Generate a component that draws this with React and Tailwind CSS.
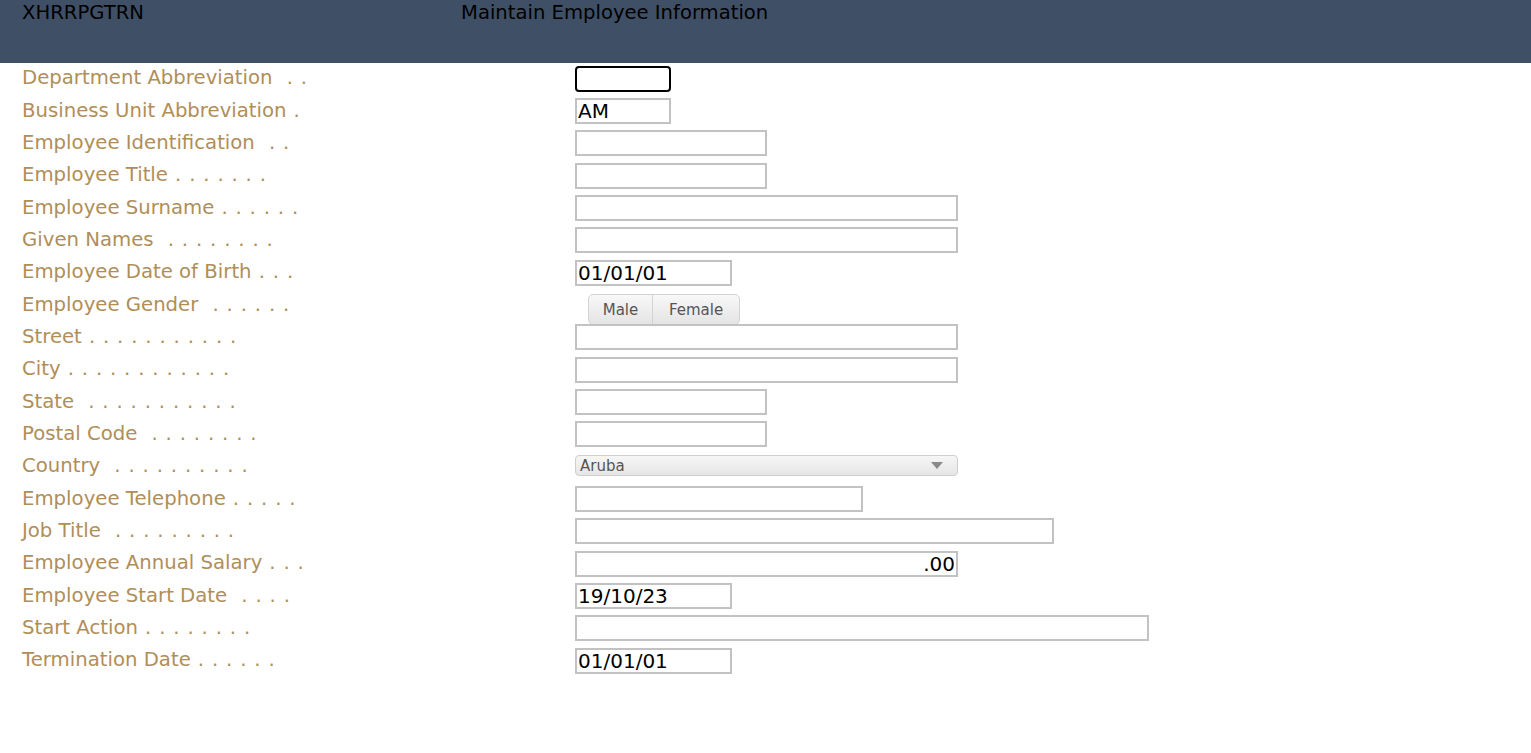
import React from "react";

// label name + dot leader, padded to 28 characters the way the green screen did
const fields = [
  { name: "Department Abbreviation", dots: "  . .", w: "w-[96px]", focused: true },
  { name: "Business Unit Abbreviation", dots: " .", w: "w-[96px]", value: "AM" },
  { name: "Employee Identification", dots: "  . .", w: "w-[192px]" },
  { name: "Employee Title", dots: " . . . . . . .", w: "w-[192px]" },
  { name: "Employee Surname", dots: " . . . . . .", w: "w-[383px]" },
  { name: "Given Names", dots: "  . . . . . . . .", w: "w-[383px]" },
  { name: "Employee Date of Birth", dots: " . . .", w: "w-[157px]", value: "01/01/01" },
  { name: "Employee Gender", dots: "  . . . . . .", type: "gender" },
  { name: "Street", dots: " . . . . . . . . . . .", w: "w-[383px]" },
  { name: "City", dots: " . . . . . . . . . . . .", w: "w-[383px]" },
  { name: "State", dots: "  . . . . . . . . . . .", w: "w-[192px]" },
  { name: "Postal Code", dots: "  . . . . . . . .", w: "w-[192px]" },
  { name: "Country", dots: "  . . . . . . . . . .", type: "select" },
  { name: "Employee Telephone", dots: " . . . . .", w: "w-[288px]" },
  { name: "Job Title", dots: "  . . . . . . . . .", w: "w-[479px]" },
  { name: "Employee Annual Salary", dots: " . . .", w: "w-[383px]", value: ".00", right: true },
  { name: "Employee Start Date", dots: "  . . . .", w: "w-[157px]", value: "19/10/23" },
  { name: "Start Action", dots: " . . . . . . . .", w: "w-[574px]" },
  { name: "Termination Date", dots: " . . . . . .", w: "w-[157px]", value: "01/01/01" },
];

function GenderToggle() {
  return (
    <div className="ml-[13px] mt-[9px] flex h-[31px] rounded-[5px] border border-[#d3d3d3] bg-gradient-to-b from-[#f8f8f8] to-[#e4e4e4] text-[15px] text-[#555] overflow-hidden">
      <span className="w-[64px] flex items-center justify-center border-r border-[#d3d3d3] pt-[1px]">Male</span>
      <span className="w-[86px] flex items-center justify-center pt-[1px]">Female</span>
    </div>
  );
}

function CountrySelect() {
  return (
    <div className="w-[383px] h-[21px] mb-[4px] rounded-[4px] border border-[#cfcfcf] bg-gradient-to-b from-[#f6f6f6] to-[#e6e6e6] flex items-center justify-between pl-[4px] pr-[14px] text-[15px] text-[#555]">
      <span className="leading-none pt-[3px]">Aruba</span>
      <svg width="12" height="7" viewBox="0 0 12 7">
        <path d="M0 0h12L6 7z" fill="#8a8a8a" />
      </svg>
    </div>
  );
}

function Field({ f }) {
  if (f.type === "gender") return <GenderToggle />;
  if (f.type === "select") return <CountrySelect />;
  const border = f.focused
    ? "border-2 border-black rounded-[4px]"
    : "border-2 border-[#c2c2c2]";
  return (
    <div
      className={`${f.w} ${border} h-[26px] mb-[1px] flex items-center text-[20px] text-black leading-none ${
        f.right ? "justify-end pr-[1px]" : "pl-[1px]"
      }`}
    >
      <span className="pt-[1px]">{f.value || ""}</span>
    </div>
  );
}

export default function App() {
  return (
    <div className="w-[1531px] min-h-[753px] bg-white font-['DejaVu_Sans',sans-serif]">
      <div className="h-[63px] bg-[#3f4f66] flex text-[19.6px] text-black leading-none pt-[3px]">
        <div className="w-[461px] pl-[22px]">XHRRPGTRN</div>
        <div>Maintain Employee Information</div>
      </div>
      <div>
        {fields.map((f) => (
          <div key={f.name} className="flex h-[32.33px] items-center">
            <div className="w-[575px] pl-[22px] text-[19.7px] text-[#b08e58] whitespace-pre mb-[2px]">
              {f.name}
              <span className="tracking-[0.8px]">{f.dots}</span>
            </div>
            <Field f={f} />
          </div>
        ))}
      </div>
    </div>
  );
}
